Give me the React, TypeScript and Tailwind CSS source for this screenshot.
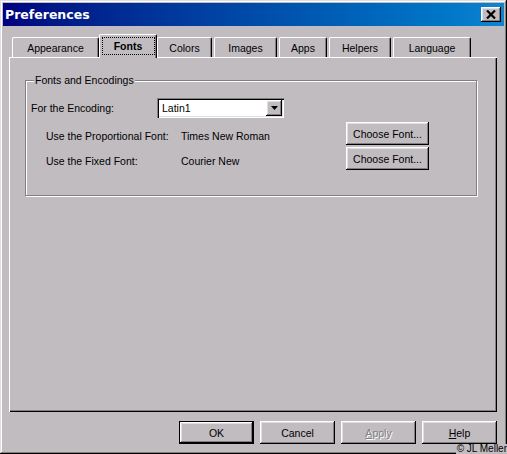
import React from 'react'

const raised =
  'shadow-[inset_-1px_-1px_0_#000,inset_1px_1px_0_#fff,inset_-2px_-2px_0_#808080,inset_2px_2px_0_#dfdfdf]'

function Tab({ label, width, selected }: { label: string; width: string; selected?: boolean }) {
  if (selected) {
    return (
      <div
        className={`relative z-10 -mb-[1px] flex h-[24px] items-start justify-center rounded-t-[2px] border-l border-t border-r border-l-white border-t-white border-r-black bg-[#c0bcc0] pt-[2px] shadow-[inset_-1px_0_0_#808080] ${width}`}
      >
        <div className="flex h-[18px] w-[53px] items-center justify-center border border-dotted border-black font-bold">
          {label}
        </div>
      </div>
    )
  }
  return (
    <div
      className={`flex h-[20px] items-center justify-center rounded-t-[2px] border-l border-t border-r border-l-white border-t-white border-r-black pt-[1px] shadow-[inset_-1px_0_0_#808080] ${width}`}
    >
      {label}
    </div>
  )
}

function Button({ children, isDefault, w = 'w-[75px]' }: { children: React.ReactNode; isDefault?: boolean; w?: string }) {
  if (isDefault) {
    return (
      <div className={`flex h-[23px] ${w} border border-black`}>
        <div className={`flex flex-1 items-center justify-center ${raised}`}>{children}</div>
      </div>
    )
  }
  return <div className={`flex h-[23px] ${w} items-center justify-center ${raised}`}>{children}</div>
}

export default function App() {
  return (
    <div className="relative flex h-[454px] w-[507px] flex-col bg-[#c0bcc0] p-[3px] font-['Liberation_Sans',Arial,sans-serif] text-[10.5px] leading-[12px] text-black shadow-[inset_-1px_-1px_0_#000,inset_1px_1px_0_#dfdfdf,inset_-2px_-2px_0_#808080,inset_2px_2px_0_#fff]">
      {/* title bar */}
      <div className="flex h-[23px] items-center bg-gradient-to-r from-[#000080] to-[#1084d0] pl-[2px] pr-[3px]">
        <span className="font-['DejaVu_Sans',Verdana,sans-serif] text-[12.5px] font-bold text-white">Preferences</span>
        <div className={`ml-auto flex h-[15px] w-[20px] items-center justify-center bg-[#c0bcc0] ${raised}`}>
          <svg width="10" height="9" viewBox="0 0 10 9">
            <path d="M1 0.5 L9 8.5 M9 0.5 L1 8.5" stroke="#000" strokeWidth="2.2" />
          </svg>
        </div>
      </div>

      {/* tabs */}
      <div className="ml-[9px] mt-[8px] flex h-[23px] items-end">
        <Tab label="Appearance" width="w-[87px]" />
        <Tab label="Fonts" width="w-[58px]" selected />
        <Tab label="Colors" width="w-[55px]" />
        <div className="w-[2px]" />
        <Tab label="Images" width="w-[63px]" />
        <div className="w-[2px]" />
        <Tab label="Apps" width="w-[48px]" />
        <div className="w-[2px]" />
        <Tab label="Helpers" width="w-[62px]" />
        <div className="w-[2px]" />
        <Tab label="Language" width="w-[78px]" />
      </div>

      {/* panel */}
      <div className="ml-[6px] h-[355px] w-[488px] pl-[16px] pt-[23px] shadow-[inset_1px_1px_0_#fff,inset_-1px_-1px_0_#000,inset_-2px_-2px_0_#808080]">
        <div className="relative h-[116px] w-[452px] border border-[#808080] pl-[5px] pt-[17px] shadow-[1px_1px_0_#fff,inset_1px_1px_0_#fff]">
          <span className="absolute -top-[7px] left-[8px] bg-[#c0bcc0] px-[1px]">Fonts and Encodings</span>

          <div className="flex h-[20px] items-center">
            <span className="w-[126px]">For the Encoding:</span>
            <div className="flex h-[20px] w-[127px] items-center bg-white pl-[5px] pr-[2px] shadow-[inset_1px_1px_0_#808080,inset_2px_2px_0_#000,inset_-1px_-1px_0_#fff,inset_-2px_-2px_0_#dfdfdf]">
              <span className="flex-1">Latin1</span>
              <div className={`flex h-[16px] w-[16px] items-center justify-center bg-[#c0bcc0] ${raised}`}>
                <svg width="7" height="4" viewBox="0 0 7 4">
                  <path d="M0 0 H7 L3.5 4 Z" fill="#000" />
                </svg>
              </div>
            </div>
          </div>

          <div className="mt-[4px] flex h-[25px] items-start">
            <span className="w-[150px] pl-[15px] pt-[8px]">Use the Proportional Font:</span>
            <span className="w-[165px] pt-[8px]">Times New Roman</span>
            <Button w="w-[83px]">Choose Font...</Button>
          </div>
          <div className="flex h-[25px] items-start">
            <span className="w-[150px] pl-[15px] pt-[8px]">Use the Fixed Font:</span>
            <span className="w-[165px] pt-[8px]">Courier New</span>
            <Button w="w-[83px]">Choose Font...</Button>
          </div>
        </div>
      </div>

      {/* buttons */}
      <div className="mr-[7px] mt-[9px] flex justify-end gap-[6px]">
        <Button isDefault>OK</Button>
        <Button>Cancel</Button>
        <Button>
          <span className="text-[#808080] [text-shadow:1px_1px_0_#fff]">
            <span className="underline">A</span>pply
          </span>
        </Button>
        <Button>
          <span>
            <span className="underline">H</span>elp
          </span>
        </Button>
      </div>

      <span className="absolute bottom-0 right-0 bg-[#c0bcc0] pl-[1px] text-[10px] leading-[10px]">© JL Meller</span>
    </div>
  )
}
